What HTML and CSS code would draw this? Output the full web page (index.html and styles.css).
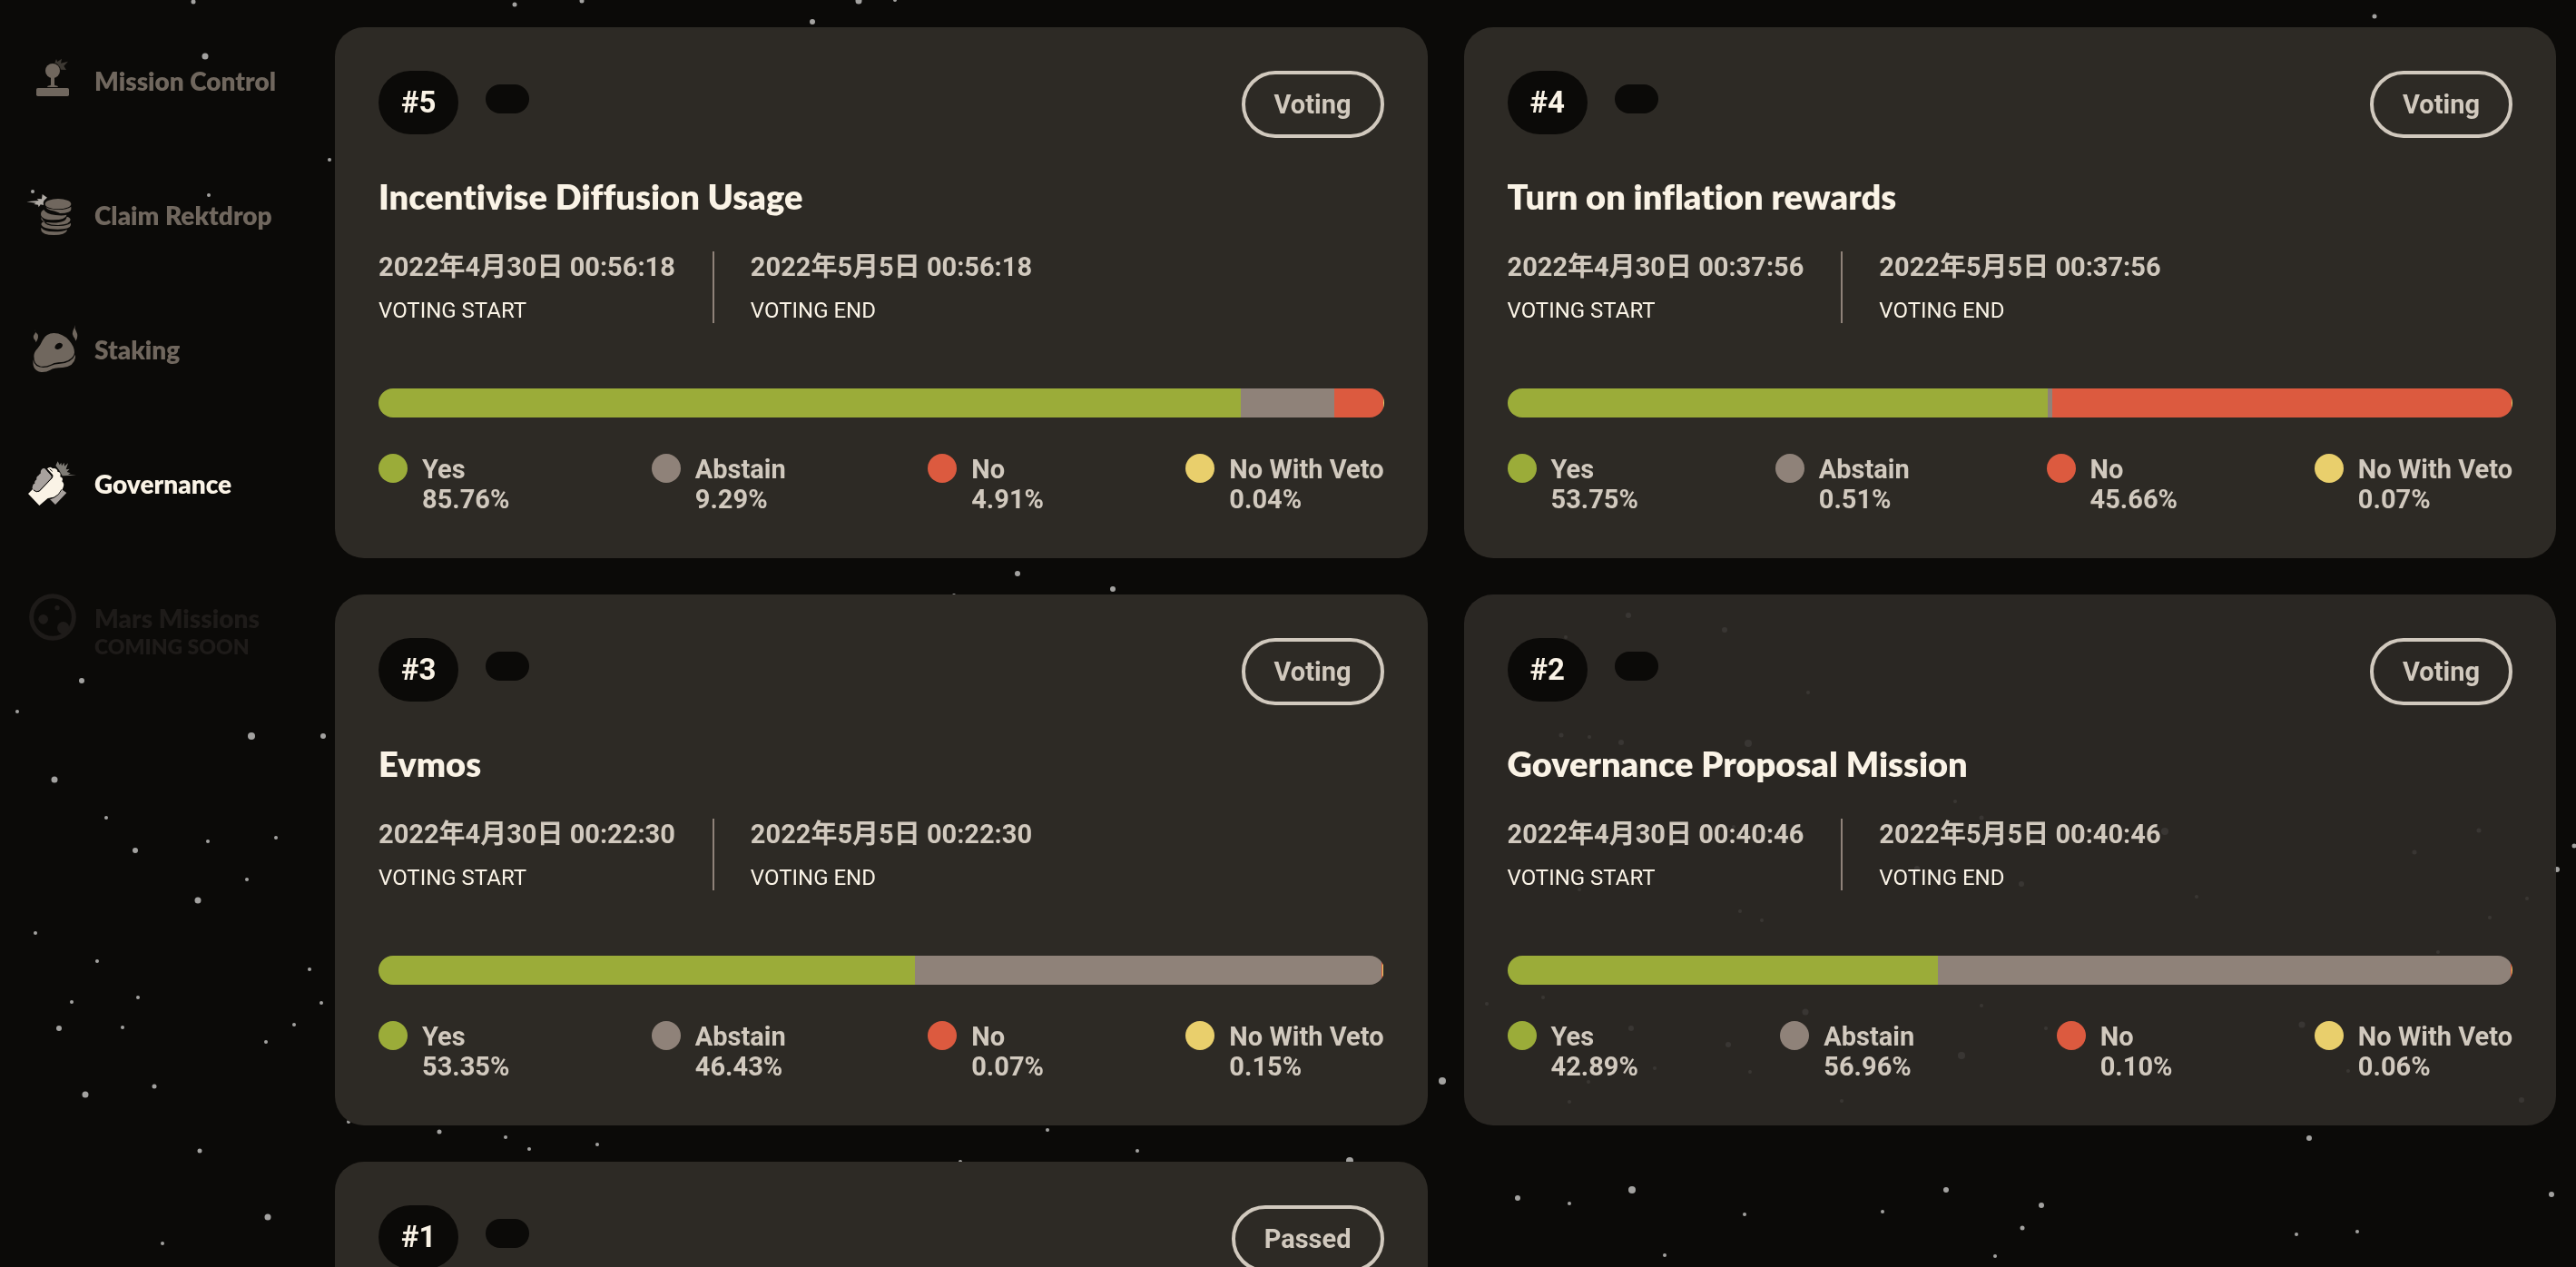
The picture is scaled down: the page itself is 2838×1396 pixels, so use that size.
FILE: index.html
```html
<!DOCTYPE html>
<html lang="en">
    <head>
        <meta charset="utf-8">
        <title>Governance</title>
        <link rel="stylesheet" href="styles.css">
    </head>
    <body>
        <svg id="stars" class="stars" viewBox="0 0 2838 1396" preserveAspectRatio="xMinYMin slice" aria-hidden="true"></svg>

        <div class="app">
            <nav class="sidebar">
                <a class="nav-item" href="#mission-control">
                    <svg class="nav-icon" viewBox="84 177 180 180">
                        <g fill="currentColor">
                            <circle cx="174" cy="234" r="24" />
                            <path d="M168 254h12v26q0 3 4 3q8 1 8 5h-36q0-4 8-5q4 0 4-3z" />
                            <rect x="120" y="291" width="108" height="27" rx="5" />
                            <path opacity=".5" d="M181 208l5-13 4 9 14-10-3 15 24-6-14 15 8 13-18-1q-5-17-20-22z" />
                        </g>
                    </svg>
                    <span class="nav-text">Mission Control</span>
                </a>
                <a class="nav-item" href="#claim-rektdrop">
                    <svg class="nav-icon" viewBox="84 621 180 180">
                        <path fill="#b0aba5" d="M88 667l40-4-6-6 16 1 2-16 16 11-10 9q-5 6-2 16l-10-2-6 9-2-8-14-2 7-4z" />
                        <g fill="currentColor">
                            <ellipse cx="192" cy="674" rx="43" ry="17" />
                            <path d="M235 683v9q0 12-37 13q-6-5-30-10q-13-3-16-10q14 8 40 8q30 0 43-10z" />
                            <path d="M145 693q-10 5-10 15q1 19 42 19q40 0 43-15v-2q-12 4-36 1q-32-3-39-18z" />
                            <path d="M136 717q-3 17 28 19q54 3 57-20q11 3 12 10q-1 16-40 18q-46 1-57-27z" />
                            <path d="M136 741q2-7 10-8q3 16 50 14q28-1 38-10v7q-2 14-43 14q-50 0-55-17z" />
                            <path d="M136 752q10 14 46 14q28 0 39-7v4q-5 14-43 14q-40 0-42-17z" />
                        </g>
                    </svg>
                    <span class="nav-text">Claim Rektdrop</span>
                </a>
                <a class="nav-item" href="#staking">
                    <svg class="nav-icon" viewBox="84 45 180 180">
                        <g fill="currentColor">
                            <path fill-rule="evenodd" d="M112 157q0-13 12-25q9-10 17-28q12-23 37-23q30 1 50 24q18 20 18 40q-1 17-22 27q-12 6-31 6q-15 1-25 7q-15 8-33 6q-23-3-23-34zM181 130q4 7 13 4q12-3 13-13q-1-8-11-8q-14 3-15 17z" />
                            <path d="M110 169q3 25 33 26q14 0 27-7q10-5 24-5q42-2 55-31v10q-4 29-42 33q-30 1-41 8q-13 8-30 7q-31-4-26-41z" />
                            <path d="M116 68q-1 10 8 16q6 10-5 28q-1-8-6-11q-6-9 2-18q4-6 1-15z" />
                            <path d="M247 54q-1 13 5 22q9 16-2 31q-1-8-7-14q-6-9-2-19q6-9 6-20z" />
                        </g>
                    </svg>
                    <span class="nav-text">Staking</span>
                </a>
                <a class="nav-item nav-active" href="#governance">
                    <svg class="nav-icon" viewBox="84 489 180 180">
                        <path fill="#7f7c76" d="M184 519l7-14 6 12 5-8 2 11 8-11 1 12 12-10-7 21 12-2-9 10 12 4-8 4 27 3-46 2q-8-18-22-34z" />
                        <path fill="#a8a29e" d="M165 630l12-4q15-8 26-29l17 12-37 39z" />
                        <path fill="currentColor" d="M93 612l15-15q8 11 21 8l43-45q7-8 0-13l-16-18q11-9 18 0q4-3 12 1q5 4 4 9q13 1 9 17q12 4 6 15q9 8 4 19q-6 21-29 33l-22 4-28 24z" />
                        <path fill="#a8a29e" d="M109 598q-4-4-1-12q1-7 7-8q-2-8 6-13q-2-9 6-13q2-5 7-7q-1-11 5-15q7-5 12 2l18 20q3 4 0 8l-39 42q-11 8-21-4z" />
                        <path fill="none" stroke="#0b0a08" stroke-width="3" d="M158 537l13 14q4 5 0 10l-41 42q-9 6-19-3M164 530l9 8M166 628l13-4q16-7 25-26" />
                    </svg>
                    <span class="nav-text">Governance</span>
                </a>
                <div class="nav-item nav-disabled">
                    <svg class="nav-icon" viewBox="84 933 180 180">
                        <circle cx="174" cy="1020" r="70" fill="none" stroke="currentColor" stroke-width="15" />
                        <g fill="currentColor">
                            <circle cx="143" cy="1027" r="16" />
                            <circle cx="189" cy="989" r="8" />
                            <circle cx="209" cy="1055" r="20" />
                        </g>
                    </svg>
                    <span class="nav-text">Mars Missions <small class="nav-soon">COMING SOON</small></span>
                </div>
            </nav>

            <main class="proposals">
                <article class="card">
                    <header class="card-head">
                        <span class="number">#5</span>
                        <span class="tag"></span>
                        <span class="status">Voting</span>
                    </header>
                    <h2 class="title">Incentivise Diffusion Usage</h2>
                    <div class="dates">
                        <p class="date"><b>2022年4月30日 00:56:18</b><span>VOTING START</span></p>
                        <p class="date"><b>2022年5月5日 00:56:18</b><span>VOTING END</span></p>
                    </div>
                    <div class="bar">
                        <div class="yes" style="width: 85.76%"></div>
                        <div class="abstain" style="width: 9.29%"></div>
                        <div class="no" style="width: 4.91%"></div>
                        <div class="veto" style="width: 0.04%"></div>
                    </div>
                    <ul class="legend">
                        <li><i class="dot yes"></i><span>Yes<br>85.76%</span></li>
                        <li><i class="dot abstain"></i><span>Abstain<br>9.29%</span></li>
                        <li><i class="dot no"></i><span>No<br>4.91%</span></li>
                        <li><i class="dot veto"></i><span>No With Veto<br>0.04%</span></li>
                    </ul>
                </article>

                <article class="card">
                    <header class="card-head">
                        <span class="number">#4</span>
                        <span class="tag"></span>
                        <span class="status">Voting</span>
                    </header>
                    <h2 class="title">Turn on inflation rewards</h2>
                    <div class="dates">
                        <p class="date"><b>2022年4月30日 00:37:56</b><span>VOTING START</span></p>
                        <p class="date"><b>2022年5月5日 00:37:56</b><span>VOTING END</span></p>
                    </div>
                    <div class="bar">
                        <div class="yes" style="width: 53.75%"></div>
                        <div class="abstain" style="width: 0.51%"></div>
                        <div class="no" style="width: 45.66%"></div>
                        <div class="veto" style="width: 0.07%"></div>
                    </div>
                    <ul class="legend">
                        <li><i class="dot yes"></i><span>Yes<br>53.75%</span></li>
                        <li><i class="dot abstain"></i><span>Abstain<br>0.51%</span></li>
                        <li><i class="dot no"></i><span>No<br>45.66%</span></li>
                        <li><i class="dot veto"></i><span>No With Veto<br>0.07%</span></li>
                    </ul>
                </article>

                <article class="card">
                    <header class="card-head">
                        <span class="number">#3</span>
                        <span class="tag"></span>
                        <span class="status">Voting</span>
                    </header>
                    <h2 class="title">Evmos</h2>
                    <div class="dates">
                        <p class="date"><b>2022年4月30日 00:22:30</b><span>VOTING START</span></p>
                        <p class="date"><b>2022年5月5日 00:22:30</b><span>VOTING END</span></p>
                    </div>
                    <div class="bar">
                        <div class="yes" style="width: 53.35%"></div>
                        <div class="abstain" style="width: 46.43%"></div>
                        <div class="no" style="width: 0.07%"></div>
                        <div class="veto" style="width: 0.15%"></div>
                    </div>
                    <ul class="legend">
                        <li><i class="dot yes"></i><span>Yes<br>53.35%</span></li>
                        <li><i class="dot abstain"></i><span>Abstain<br>46.43%</span></li>
                        <li><i class="dot no"></i><span>No<br>0.07%</span></li>
                        <li><i class="dot veto"></i><span>No With Veto<br>0.15%</span></li>
                    </ul>
                </article>

                <article class="card card-clear">
                    <header class="card-head">
                        <span class="number">#2</span>
                        <span class="tag"></span>
                        <span class="status">Voting</span>
                    </header>
                    <h2 class="title">Governance Proposal Mission</h2>
                    <div class="dates">
                        <p class="date"><b>2022年4月30日 00:40:46</b><span>VOTING START</span></p>
                        <p class="date"><b>2022年5月5日 00:40:46</b><span>VOTING END</span></p>
                    </div>
                    <div class="bar">
                        <div class="yes" style="width: 42.89%"></div>
                        <div class="abstain" style="width: 56.96%"></div>
                        <div class="no" style="width: 0.10%"></div>
                        <div class="veto" style="width: 0.06%"></div>
                    </div>
                    <ul class="legend">
                        <li><i class="dot yes"></i><span>Yes<br>42.89%</span></li>
                        <li><i class="dot abstain"></i><span>Abstain<br>56.96%</span></li>
                        <li><i class="dot no"></i><span>No<br>0.10%</span></li>
                        <li><i class="dot veto"></i><span>No With Veto<br>0.06%</span></li>
                    </ul>
                </article>

                <article class="card">
                    <header class="card-head">
                        <span class="number">#1</span>
                        <span class="tag"></span>
                        <span class="status">Passed</span>
                    </header>
                </article>
            </main>
        </div>

        <script src="stars.js"></script>
    </body>
</html>
```
FILE: styles.css
```css
* {
    box-sizing: border-box;
}

body {
    margin: 0;
    background-color: #0b0a08;
    color: #faf3e6;
    font-family: Roboto, "Noto Sans CJK SC", sans-serif;
}

.stars {
    position: fixed;
    top: 0;
    left: 0;
    width: 100%;
    height: 100%;
    fill: #a3a2a0;
}

.app {
    position: relative;
    display: flex;
    height: 100vh;
    overflow: hidden;
}

/* sidebar */

.sidebar {
    flex: 0 0 369px;
    display: flex;
    flex-direction: column;
    gap: 88px;
    padding: 59px 0 0 28px;
}

.nav-item {
    display: flex;
    gap: 16px;
    color: #70675e;
    font-family: Lato, sans-serif;
    font-size: 28px;
    font-weight: 800;
    line-height: 34px;
    text-decoration: none;
}

.nav-icon {
    flex: none;
    width: 60px;
    height: 60px;
}

.nav-text {
    padding-top: 13px;
}

.nav-active {
    color: #faf3e6;
}

.nav-disabled {
    color: #1e1b19;
}

.nav-soon {
    display: block;
    font-size: 23px;
    line-height: 29px;
}

/* proposals */

.proposals {
    flex: 1;
    display: grid;
    grid-template-columns: 1fr 1fr;
    align-content: start;
    gap: 40px;
    padding: 30px 22px 30px 0;
}

.card {
    padding: 48px;
    border-radius: 32px;
    background-color: #2d2a25;
}

.card-clear {
    background-color: rgba(46, 42, 39, 0.9);
}

.card-head {
    display: flex;
    align-items: flex-start;
}

.number {
    padding: 0 25px;
    border-radius: 35px;
    background-color: #0b0a08;
    font-size: 33px;
    font-weight: 700;
    line-height: 70px;
}

.tag {
    width: 48px;
    height: 32px;
    margin: 15px 0 0 30px;
    border-radius: 16px;
    background-color: #0b0a08;
}

.status {
    margin-left: auto;
    padding: 0 32px;
    border: 4px solid #d1c9be;
    border-radius: 37px;
    color: #d1c9be;
    font-size: 29px;
    font-weight: 700;
    line-height: 66px;
}

.title {
    margin: 41px 0 38px;
    font-family: Lato, sans-serif;
    font-size: 38px;
    font-weight: 800;
    font-variant-ligatures: none;
    line-height: 46px;
}

.dates {
    display: flex;
}

.date {
    display: flex;
    flex-direction: column;
    gap: 16px;
    margin: 0;
    font-size: 24px;
    line-height: 28px;
}

.date b {
    color: #d1c9be;
    font-size: 29px;
    line-height: 35px;
}

.date + .date {
    margin-left: 41px;
    padding-left: 40px;
    border-left: 2px solid #8f8279;
}

.bar {
    display: flex;
    height: 32px;
    margin: 72px 0 40px;
    border-radius: 16px;
    overflow: hidden;
}

.yes {
    background-color: #9bac39;
}

.abstain {
    background-color: #8f8279;
}

.no {
    background-color: #dc5a3f;
}

.veto {
    background-color: #e9cf6c;
}

.legend {
    display: flex;
    justify-content: space-between;
    margin: 0;
    padding: 0;
    list-style: none;
    color: #d1c9be;
    font-size: 29px;
    font-weight: 700;
    line-height: 33px;
}

.legend li {
    display: flex;
    gap: 16px;
}

.legend span {
    padding-top: 1px;
}

.dot {
    width: 32px;
    height: 32px;
    border-radius: 50%;
}
```
FILE: stars.js
```js
// x, y, radius
const stars = [
    [213, 2, 2.5], [226, 62, 3.5], [363, 176, 2], [36, 211, 2], [230, 215, 2],
    [567, 5, 2.5], [641, 1, 2.5], [946, 1, 3.5], [895, 24, 3], [986, 0, 2], [2616, 18, 2.5],
    [90, 750, 3], [19, 784, 2], [277, 811, 4], [356, 811, 3], [60, 859, 3.5],
    [117, 901, 2], [149, 937, 3], [229, 927, 2], [304, 923, 2], [272, 969, 2],
    [218, 992, 3.5], [39, 1028, 2], [107, 1059, 2], [341, 1068, 2], [79, 1104, 2],
    [152, 1099, 2], [354, 1105, 2], [65, 1133, 3], [135, 1132, 2], [324, 1129, 2],
    [293, 1148, 2], [94, 1206, 3.5], [170, 1197, 2.5], [384, 1236, 2], [220, 1268, 2.5],
    [295, 1341, 3.5], [179, 1370, 2],
    [1121, 632, 3], [1226, 649, 3], [1051, 656, 2],
    [484, 1247, 2.5], [557, 1253, 2], [583, 1266, 2], [658, 1261, 2], [1154, 1245, 2],
    [1253, 1268, 2], [1058, 1280, 2], [1487, 1279, 4], [1589, 1191, 4],
    [2544, 1254, 3], [1798, 1311, 4], [1672, 1320, 3], [1729, 1326, 2], [1922, 1338, 2],
    [2074, 1335, 2], [2144, 1311, 3], [2249, 1328, 3], [2228, 1353, 2.5], [1834, 1383, 2],
    [2198, 1384, 2], [2530, 1360, 2], [2597, 1357, 2], [2811, 1316, 3], [2836, 932, 2.5], [2817, 958, 3],
    [1794, 678, 3], [1900, 694, 3], [1725, 702, 2], [1992, 763, 2], [1720, 810, 2.5],
    [1751, 812, 2], [1786, 818, 3], [1926, 819, 4], [2154, 883, 2], [2183, 901, 2.5],
    [2385, 916, 4], [2731, 915, 2.5], [2660, 939, 2.5], [1910, 911, 2], [2112, 957, 3],
    [2227, 974, 3], [1740, 980, 2], [1917, 1004, 2], [1941, 1014, 2], [2420, 988, 2],
    [2784, 990, 2], [2743, 1011, 2], [2686, 1049, 2], [1638, 1106, 2], [1700, 1099, 2],
    [2183, 1108, 2], [1989, 1115, 3.5], [1797, 1133, 3], [2254, 1133, 2], [2536, 1129, 3.5],
    [1904, 1151, 3], [2161, 1163, 4], [1823, 1177, 2], [1928, 1181, 2], [1750, 1192, 2],
    [1729, 1214, 2], [2587, 1180, 2], [2029, 1213, 2], [2778, 1212, 3]
];

const sky = document.getElementById("stars");
for (const [x, y, r] of stars) {
    const star = document.createElementNS("http://www.w3.org/2000/svg", "circle");
    star.setAttribute("cx", x);
    star.setAttribute("cy", y);
    star.setAttribute("r", r);
    sky.appendChild(star);
}
```
